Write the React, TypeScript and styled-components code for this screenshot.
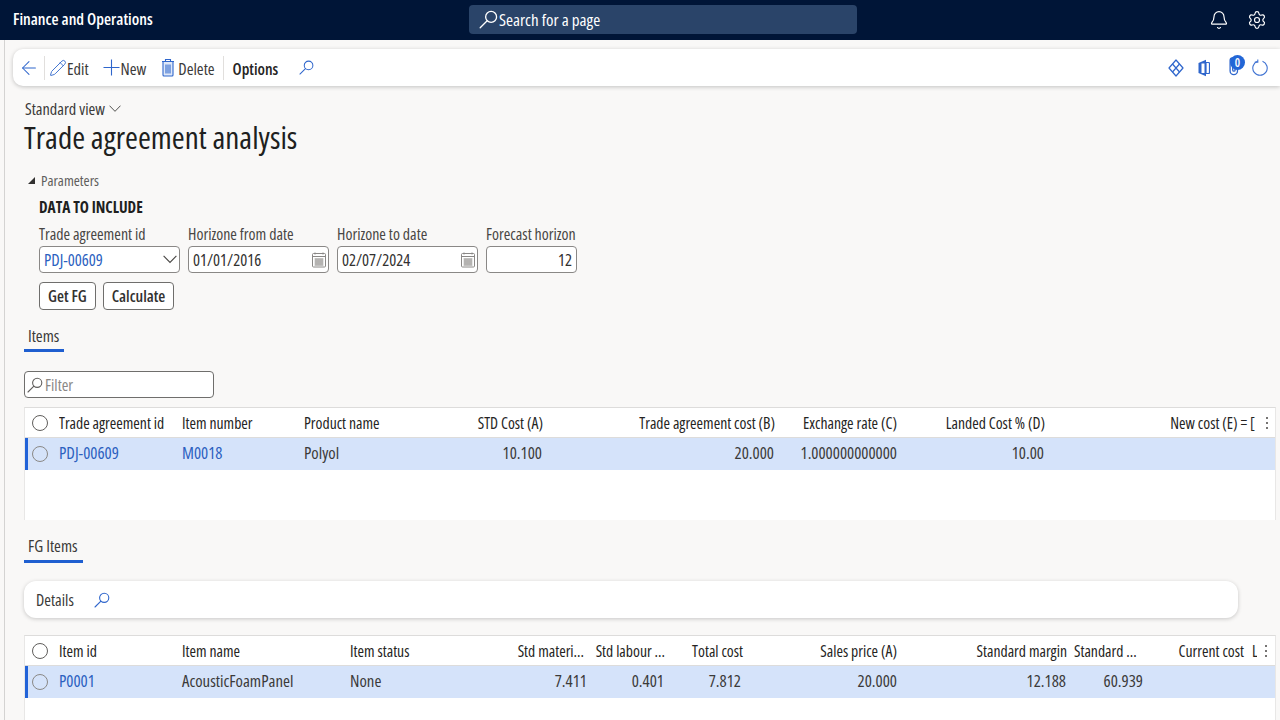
import styled, { createGlobalStyle } from 'styled-components';
import { ArrowLeft, Bell, Pencil, Settings } from 'lucide-react';

const GlobalStyle = createGlobalStyle`
  html, body {
    margin: 0;
    height: 100%;
    overflow: hidden;
    background: #f9f8f7;
  }
  body {
    font-family: "Open Sans", "Noto Sans", sans-serif;
    font-stretch: 80%;
    font-size: 16px;
    color: #252423;
  }
`;

const Page = styled.div`
  width: 1280px;
  height: 720px;
  overflow: hidden;
`;

const TopBar = styled.header`
  height: 40px;
  background: #001537;
  display: flex;
  align-items: center;
  padding: 0 13px;
  color: #fff;
`;

const Brand = styled.div`
  font-size: 16.2px;
  font-weight: 600;
  width: 456px;
  margin-top: -3px;
  white-space: nowrap;
`;

const SearchBox = styled.div`
  width: 388px;
  height: 29px;
  margin-top: -2px;
  border-radius: 4px;
  background: #2a4469;
  display: flex;
  align-items: center;
  gap: 1px;
  padding-left: 10px;
  box-sizing: border-box;
  font-size: 17px;
`;

const TopIcons = styled.div`
  margin-left: auto;
  display: flex;
  align-items: center;
  gap: 18px;
`;

const Body = styled.main`
  height: 680px;
  margin-left: 4px;
  border-left: 1px solid #d4d3d2;
  padding: 9px 0 0 8px;
  box-sizing: border-box;
`;

const CommandBar = styled.div`
  height: 37px;
  background: #fff;
  border-radius: 10px 0 0 10px;
  box-shadow: 0 1px 4px rgba(0, 0, 0, 0.22);
  display: flex;
  align-items: center;
  padding-left: 5px;
`;

const BackArrow = styled(ArrowLeft)`
  margin-right: -1px;
`;

const EditPencil = styled(Pencil)`
  margin: 0 -1px 0 -1px;
`;

const Separator = styled.div`
  width: 1px;
  height: 24px;
  background: #e1dfdd;
  margin: 0 5px;
`;

const CommandButton = styled.div<{ $gap?: number }>`
  display: flex;
  align-items: center;
  gap: 1px;
  font-size: 16.4px;
  color: #3b3a39;
  margin-right: ${(p) => p.$gap ?? 0}px;
`;

const CommandLabel = styled.span`
  margin-top: 2px;
`;

const OptionsLabel = styled.div`
  font-size: 16px;
  font-weight: 600;
  color: #252423;
  margin: 2px 21px 0 4px;
`;

const RightIcons = styled.div`
  margin-left: auto;
  display: flex;
  align-items: center;
  gap: 14px;
  padding-right: 12px;
`;

const AttachWrap = styled.div`
  position: relative;
  width: 16px;
  height: 24px;
  margin: 0 -7px 0 5px;
`;

const AttachBadge = styled.span`
  position: absolute;
  top: -1px;
  left: 1px;
  width: 15px;
  height: 15px;
  border-radius: 50%;
  background: #2266d6;
  color: #fff;
  font-size: 12px;
  font-weight: 600;
  line-height: 15px;
  text-align: center;
`;

const ViewPicker = styled.div`
  display: flex;
  align-items: center;
  gap: 4px;
  font-size: 16.3px;
  color: #3b3a39;
  margin: 13px 0 0 12px;
  height: 20px;
`;

const Title = styled.h1`
  font-size: 31.2px;
  font-weight: 400;
  line-height: 37px;
  margin: 0 0 0 11px;
  color: #201f1e;
`;

const ParamHeader = styled.div`
  display: flex;
  align-items: center;
  gap: 6px;
  margin: 15px 0 0 15px;
  height: 18px;
  font-size: 14.7px;
  color: #605e5c;
`;

const Triangle = styled.span`
  width: 0;
  height: 0;
  border-style: solid;
  border-width: 0 0 7px 7px;
  border-color: transparent transparent #323130 transparent;
`;

const Params = styled.section`
  margin-left: 26px;
`;

const GroupTitle = styled.div`
  font-size: 15.4px;
  font-weight: 700;
  color: #201f1e;
  margin-top: 10px;
  line-height: 18px;
`;

const Fields = styled.div`
  display: flex;
  gap: 8px;
  margin-top: 7px;
`;

const Field = styled.div<{ $width: number }>`
  width: ${(p) => p.$width}px;
  display: flex;
  flex-direction: column;
`;

const FieldLabel = styled.label`
  font-size: 15.9px;
  line-height: 22px;
  margin-top: -1px;
  padding-bottom: 1px;
  color: #484644;
  white-space: nowrap;
`;

const InputBox = styled.div<{ $blue?: boolean; $right?: boolean }>`
  height: 27px;
  border: 1px solid #8a8886;
  border-radius: 4px;
  background: #fff;
  box-sizing: border-box;
  display: flex;
  align-items: center;
  justify-content: ${(p) => (p.$right ? 'flex-end' : 'space-between')};
  padding: 0 ${(p) => (p.$right ? 4 : 2)}px 0 4px;
  font-size: 16.5px;
  color: ${(p) => (p.$blue ? '#2b5fc0' : '#323130')};
`;

const Buttons = styled.div`
  display: flex;
  gap: 7px;
  margin-top: 9px;
`;

const ActionButton = styled.button`
  height: 28px;
  padding: 0 8px;
  background: #fff;
  border: 1px solid #6f6e6c;
  border-radius: 4px;
  font: inherit;
  font-size: 16px;
  font-weight: 600;
  color: #323130;
`;

const Tab = styled.div<{ $width: number }>`
  width: ${(p) => p.$width}px;
  margin-left: 11px;
  padding-left: 4px;
  box-sizing: border-box;
  font-size: 16.5px;
  line-height: 20px;
  color: #3b3a39;
  padding-bottom: 3px;
  border-bottom: 3px solid #1f5fd0;
  white-space: nowrap;
`;

const ItemsTab = styled(Tab)`
  margin-top: 16px;
`;

const FgTab = styled(Tab)`
  margin-top: 16px;
  padding-bottom: 4px;
`;

const FilterBox = styled.div`
  width: 190px;
  height: 27px;
  margin: 19px 0 9px 11px;
  border: 1px solid #6f6e6c;
  border-radius: 4px;
  background: #fff;
  box-sizing: border-box;
  display: flex;
  align-items: center;
  gap: 2px;
  padding-left: 2px;
  font-size: 16px;
  color: #8a8886;
`;

const GridPanel = styled.div<{ $height: number }>`
  margin: 0 4px 0 11px;
  height: ${(p) => p.$height}px;
  background: #fff;
  border-top: 1px solid #dddcdb;
  border-right: 1px solid #e8e7e6;
  border-left: 1px solid #e8e7e6;
  overflow: hidden;
`;

const GridRow = styled.div<{ $columns: string; $selected?: boolean }>`
  display: grid;
  grid-template-columns: ${(p) => p.$columns};
  height: ${(p) => (p.$selected ? 32 : 29)}px;
  align-items: center;
  background: ${(p) => (p.$selected ? '#d5e3fa' : '#fff')};
  border-bottom: ${(p) => (p.$selected ? 'none' : '1px solid #dddcdb')};
  box-shadow: ${(p) => (p.$selected ? 'inset 3px 0 0 #2263d8' : 'none')};
`;

const CheckCell = styled.div`
  padding-left: 7px;
  display: flex;
`;

const Radio = styled.span<{ $muted?: boolean }>`
  width: 14px;
  height: 14px;
  border-radius: 50%;
  border: 1px solid ${(p) => (p.$muted ? '#8a8886' : '#605e5c')};
`;

const HeadCell = styled.div<{ $right?: boolean; $pad: number }>`
  font-size: 15.7px;
  color: #252423;
  white-space: nowrap;
  overflow: hidden;
  text-align: ${(p) => (p.$right ? 'right' : 'left')};
  padding-right: ${(p) => p.$pad}px;
`;

const DataCell = styled.div<{ $right?: boolean; $pad: number; $link?: boolean }>`
  font-size: 16.8px;
  margin-top: -3px;
  color: ${(p) => (p.$link ? '#2b5fc0' : '#3b3a39')};
  white-space: nowrap;
  text-align: ${(p) => (p.$right ? 'right' : 'left')};
  padding-right: ${(p) => p.$pad}px;
`;

const ColumnMenu = styled.div`
  display: flex;
  justify-content: center;
  color: #484644;
`;

const DetailsBar = styled.div`
  height: 37px;
  width: 1214px;
  margin: 18px 0 17px 11px;
  background: #fff;
  border-radius: 12px;
  box-shadow: 0 1px 4px rgba(0, 0, 0, 0.2);
  display: flex;
  align-items: center;
  gap: 20px;
  padding-left: 12px;
  box-sizing: border-box;
  font-size: 16.2px;
  color: #3b3a39;
`;

type Column = {
  label: string;
  width: number;
  value?: string;
  right?: boolean;
  link?: boolean;
  headPad?: number;
  cellPad?: number;
};

const itemColumns: Column[] = [
  { label: 'Trade agreement id', width: 123, value: 'PDJ-00609', link: true },
  { label: 'Item number', width: 122, value: 'M0018', link: true },
  { label: 'Product name', width: 116, value: 'Polyol' },
  { label: 'STD Cost (A)', width: 131, value: '10.100', right: true, headPad: 8, cellPad: 9 },
  { label: 'Trade agreement cost (B)', width: 232, value: '20.000', right: true, headPad: 8, cellPad: 9 },
  { label: 'Exchange rate (C)', width: 122, value: '1.000000000000', right: true, headPad: 8, cellPad: 8 },
  { label: 'Landed Cost % (D)', width: 148, value: '10.00', right: true, headPad: 8, cellPad: 9 },
  { label: 'New cost (E) = [', width: 205, right: true, headPad: 3 },
];

const fgColumns: Column[] = [
  { label: 'Item id', width: 123, value: 'P0001', link: true },
  { label: 'Item name', width: 168, value: 'AcousticFoamPanel' },
  { label: 'Item status', width: 120, value: 'None' },
  { label: 'Std materi...', width: 125, value: '7.411', right: true, headPad: 11, cellPad: 8 },
  { label: 'Std labour ...', width: 77, value: '0.401', right: true, headPad: 7, cellPad: 8 },
  { label: 'Total cost', width: 79, value: '7.812', right: true, headPad: 8, cellPad: 10 },
  { label: 'Sales price (A)', width: 154, value: '20.000', right: true, headPad: 8, cellPad: 8 },
  { label: 'Standard margin', width: 169, value: '12.188', right: true, headPad: 7, cellPad: 8 },
  { label: 'Standard ...', width: 77, value: '60.939', right: true, headPad: 16, cellPad: 8 },
  { label: 'Current cost', width: 101, right: true, headPad: 8 },
  { label: 'L', width: 5 },
];

const templateOf = (cols: Column[]) =>
  `34px ${cols.map((c) => `${c.width}px`).join(' ')} 1fr`;

function SearchIcon({ size, color }: { size: number; color: string }) {
  return (
    <svg width={size} height={size} viewBox="0 0 16 16" fill="none" stroke={color} strokeWidth="1.1" strokeLinecap="round">
      <circle cx="10.2" cy="5.8" r="4.6" />
      <path d="M6.9 9.1L1 15" />
    </svg>
  );
}

function ChevronIcon({ width }: { width: number }) {
  return (
    <svg width={width} height={width * 0.6} viewBox="0 0 14 8.4" fill="none" stroke="#484644" strokeWidth="1.1">
      <path d="M0.6 0.8L7 7.4l6.4-6.6" />
    </svg>
  );
}

function PlusIcon() {
  return (
    <svg width="17" height="17" viewBox="0 0 17 17" fill="none" stroke="#2f66cc" strokeWidth="1.1">
      <path d="M8.5 0.5v16M0.5 8.5h16" />
    </svg>
  );
}

function TrashIcon() {
  return (
    <svg width="16" height="19" viewBox="0 0 16 19" fill="none" stroke="#2f66cc" strokeWidth="1.1">
      <path d="M1 3.5h12M4.5 3.5V1.5h5v2" />
      <path d="M2 3.5h10v13.5a1 1 0 0 1-1 1H3a1 1 0 0 1-1-1z" fill="#dfe8f8" />
      <path d="M5 6.5v9M7 6.5v9M9 6.5v9" />
    </svg>
  );
}

function MoreIcon() {
  return (
    <svg width="4" height="14" viewBox="0 0 4 14" fill="#484644">
      <circle cx="2" cy="2" r="1" />
      <circle cx="2" cy="7" r="1" />
      <circle cx="2" cy="12" r="1" />
    </svg>
  );
}

function CalendarIcon() {
  return (
    <svg width="14" height="16" viewBox="0 0 14 16" fill="none" stroke="#8a8886" strokeWidth="1">
      <rect x="0.5" y="1.5" width="13" height="13.5" rx="1" />
      <path d="M0.5 4.5h13M3 0.5v2M11 0.5v2" />
      <path d="M2.5 7h9M2.5 9h9M2.5 11h9M2.5 13h9M4 6.5v7M6 6.5v7M8 6.5v7M10 6.5v7" strokeWidth="0.8" />
    </svg>
  );
}

function DiamondIcon() {
  return (
    <svg width="16" height="18" viewBox="0 0 16 18" fill="none" stroke="#2f66cc" strokeWidth="1.2" strokeLinejoin="round">
      <path d="M8 1l7 8-7 8-7-8z" />
      <path d="M4.5 5l7 8M11.5 5l-7 8" />
    </svg>
  );
}

function OfficeIcon() {
  return (
    <svg width="12" height="18" viewBox="0 0 12 18">
      <path d="M0.5 4L8 0.8v16.4L0.5 14z" fill="#2f66cc" />
      <path d="M4 3.5h6.5a1 1 0 0 1 1 1v9a1 1 0 0 1-1 1H8V3.5z" fill="none" stroke="#2f66cc" strokeWidth="1.2" />
      <path d="M3.5 4.5h3v9.5h-3z" fill="#fff" />
    </svg>
  );
}

function ClipIcon() {
  return (
    <svg width="10" height="20" viewBox="0 0 10 20" fill="none" stroke="#2f66cc" strokeWidth="1.3" strokeLinecap="round">
      <path d="M8.5 6v9a3.7 3.7 0 0 1-7.4 0V4.5a2.5 2.5 0 0 1 5 0V14a1.2 1.2 0 0 1-2.4 0V6" />
    </svg>
  );
}

function RefreshIcon() {
  return (
    <svg width="16" height="17" viewBox="0 0 16 17" fill="none" stroke="#3f72d2" strokeWidth="1.1">
      <path d="M10.5 2.3a7.2 7.2 0 1 1-5 0" />
      <path d="M5.8 0.5v2.6H2.8" />
    </svg>
  );
}

function DataGrid({ columns, height }: { columns: Column[]; height: number }) {
  const template = templateOf(columns);
  return (
    <GridPanel $height={height}>
      <GridRow $columns={template}>
        <CheckCell>
          <Radio />
        </CheckCell>
        {columns.map((c) => (
          <HeadCell key={c.label} $right={c.right} $pad={c.headPad ?? 0}>
            {c.label}
          </HeadCell>
        ))}
        <ColumnMenu>
          <MoreIcon />
        </ColumnMenu>
      </GridRow>
      <GridRow $columns={template} $selected>
        <CheckCell>
          <Radio $muted />
        </CheckCell>
        {columns.map((c) => (
          <DataCell key={c.label} $right={c.right} $link={c.link} $pad={c.cellPad ?? 0}>
            {c.value}
          </DataCell>
        ))}
        <span />
      </GridRow>
    </GridPanel>
  );
}

export default function App() {
  return (
    <Page>
      <GlobalStyle />
      <TopBar>
        <Brand>Finance and Operations</Brand>
        <SearchBox>
          <SearchIcon size={19} color="#fff" />
          Search for a page
        </SearchBox>
        <TopIcons>
          <Bell size={20} strokeWidth={1.4} />
          <Settings size={20} strokeWidth={1.4} />
        </TopIcons>
      </TopBar>
      <Body>
        <CommandBar>
          <BackArrow size={22} strokeWidth={1.1} color="#2f66cc" />
          <Separator />
          <CommandButton $gap={14}>
            <EditPencil size={18} strokeWidth={1.2} color="#2f66cc" />
            <CommandLabel>Edit</CommandLabel>
          </CommandButton>
          <CommandButton $gap={15}>
            <PlusIcon />
            <CommandLabel>New</CommandLabel>
          </CommandButton>
          <CommandButton $gap={3}>
            <TrashIcon />
            <CommandLabel>Delete</CommandLabel>
          </CommandButton>
          <Separator />
          <OptionsLabel>Options</OptionsLabel>
          <SearchIcon size={15} color="#2f66cc" />
          <RightIcons>
            <DiamondIcon />
            <OfficeIcon />
            <AttachWrap>
              <ClipIcon />
              <AttachBadge>0</AttachBadge>
            </AttachWrap>
            <RefreshIcon />
          </RightIcons>
        </CommandBar>

        <ViewPicker>
          Standard view
          <ChevronIcon width={12} />
        </ViewPicker>
        <Title>Trade agreement analysis</Title>

        <ParamHeader>
          <Triangle />
          Parameters
        </ParamHeader>
        <Params>
          <GroupTitle>DATA TO INCLUDE</GroupTitle>
          <Fields>
            <Field $width={141}>
              <FieldLabel>Trade agreement id</FieldLabel>
              <InputBox $blue>
                PDJ-00609
                <ChevronIcon width={14} />
              </InputBox>
            </Field>
            <Field $width={141}>
              <FieldLabel>Horizone from date</FieldLabel>
              <InputBox>
                01/01/2016
                <CalendarIcon />
              </InputBox>
            </Field>
            <Field $width={141}>
              <FieldLabel>Horizone to date</FieldLabel>
              <InputBox>
                02/07/2024
                <CalendarIcon />
              </InputBox>
            </Field>
            <Field $width={91}>
              <FieldLabel>Forecast horizon</FieldLabel>
              <InputBox $right>12</InputBox>
            </Field>
          </Fields>
          <Buttons>
            <ActionButton>Get FG</ActionButton>
            <ActionButton>Calculate</ActionButton>
          </Buttons>
        </Params>

        <ItemsTab $width={40}>Items</ItemsTab>
        <FilterBox>
          <SearchIcon size={16} color="#605e5c" />
          Filter
        </FilterBox>
        <DataGrid columns={itemColumns} height={112} />

        <FgTab $width={59}>FG Items</FgTab>
        <DetailsBar>
          Details
          <SearchIcon size={16} color="#2f66cc" />
        </DetailsBar>
        <DataGrid columns={fgColumns} height={100} />
      </Body>
    </Page>
  );
}
